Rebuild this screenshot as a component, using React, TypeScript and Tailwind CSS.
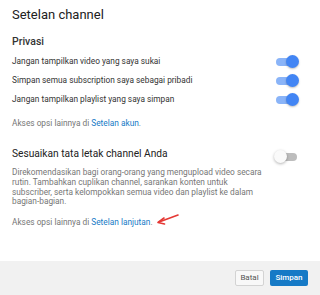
import React from 'react';

const rows = [
  'Jangan tampilkan video yang saya sukai',
  'Simpan semua subscription saya sebagai pribadi',
  'Jangan tampilkan playlist yang saya simpan',
];

function Toggle({ on }: { on: boolean }) {
  return (
    <div className="relative w-[25px] h-[13px] shrink-0">
      {on ? (
        <>
          <div className="absolute left-[2px] right-[2px] top-[2.5px] h-[8px] rounded-full bg-[#8ab4f8]" />
          <div className="absolute right-0 top-0 w-[13px] h-[13px] rounded-full bg-[#4285f4] shadow-[0_1px_2px_rgba(0,0,0,0.25)]" />
        </>
      ) : (
        <>
          <div className="absolute left-[2px] right-[2px] top-[2.5px] h-[8px] rounded-full bg-[#bdbdbd]" />
          <div className="absolute left-0 top-0 w-[13px] h-[13px] rounded-full bg-[#fafafa] shadow-[0_1px_3px_rgba(0,0,0,0.3)]" />
        </>
      )}
    </div>
  );
}

export default function App() {
  return (
    <div className="w-[320px] h-[295px] bg-white flex flex-col font-['Roboto',sans-serif] overflow-hidden">
      <div className="flex-1 pl-3 pr-[21px]">
        <h1 className="pt-[7px] text-[13px] leading-[16px] text-[#212121]">Setelan channel</h1>

        <h2 className="mt-[13px] text-[10.5px] leading-[12px] font-medium text-[#333]">Privasi</h2>

        <div className="mt-[4px]">
          {rows.map((r) => (
            <div key={r} className="h-[19px] flex items-center justify-between">
              <span className="text-[8.3px] text-[#333]">{r}</span>
              <Toggle on />
            </div>
          ))}
        </div>

        <p className="mt-[8px] text-[8.3px] leading-[12px] text-[#767676]">
          Akses opsi lainnya di <span className="text-[#167ac6]">Setelan akun</span>.
        </p>

        <div className="mt-[18px] flex items-start justify-between">
          <h2 className="text-[10.2px] leading-[13px] text-[#212121]">Sesuaikan tata letak channel Anda</h2>
          <div className="mt-[3px]">
            <Toggle on={false} />
          </div>
        </div>

        <p className="mt-[5px] w-[256px] text-[8.3px] leading-[9.75px] text-[#767676]">
          Direkomendasikan bagi orang-orang yang mengupload video secara rutin. Tambahkan cuplikan channel, sarankan konten untuk subscriber, serta kelompokkan semua video dan playlist ke dalam bagian-bagian.
        </p>

        <p className="mt-[9px] text-[8.3px] leading-[12px] text-[#767676]">
          <span className="relative">
            Akses opsi lainnya di <span className="text-[#167ac6]">Setelan lanjutan</span>.
            <svg className="absolute left-full top-[-5px] ml-[2px]" width="26" height="14" viewBox="0 0 26 14">
              <line x1="4" y1="10" x2="23" y2="3" stroke="#e53935" strokeWidth="1.6" strokeLinecap="round" />
              <path d="M3 10.5 L9 6 M3 10.5 L9.5 12" stroke="#e53935" strokeWidth="1.6" strokeLinecap="round" fill="none" />
            </svg>
          </span>
        </p>
      </div>

      <div className="h-[34px] bg-[#f1f1f1] flex items-center justify-end gap-[6px] pr-3">
        <button className="h-[16px] w-[29px] bg-[#f8f8f8] border border-[#d3d3d3] rounded-[2px] text-[8px] text-[#555]">
          Batal
        </button>
        <button className="h-[16px] w-[38px] bg-[#167ac6] rounded-[2px] text-[8px] text-white font-medium">
          Simpan
        </button>
      </div>
    </div>
  );
}
